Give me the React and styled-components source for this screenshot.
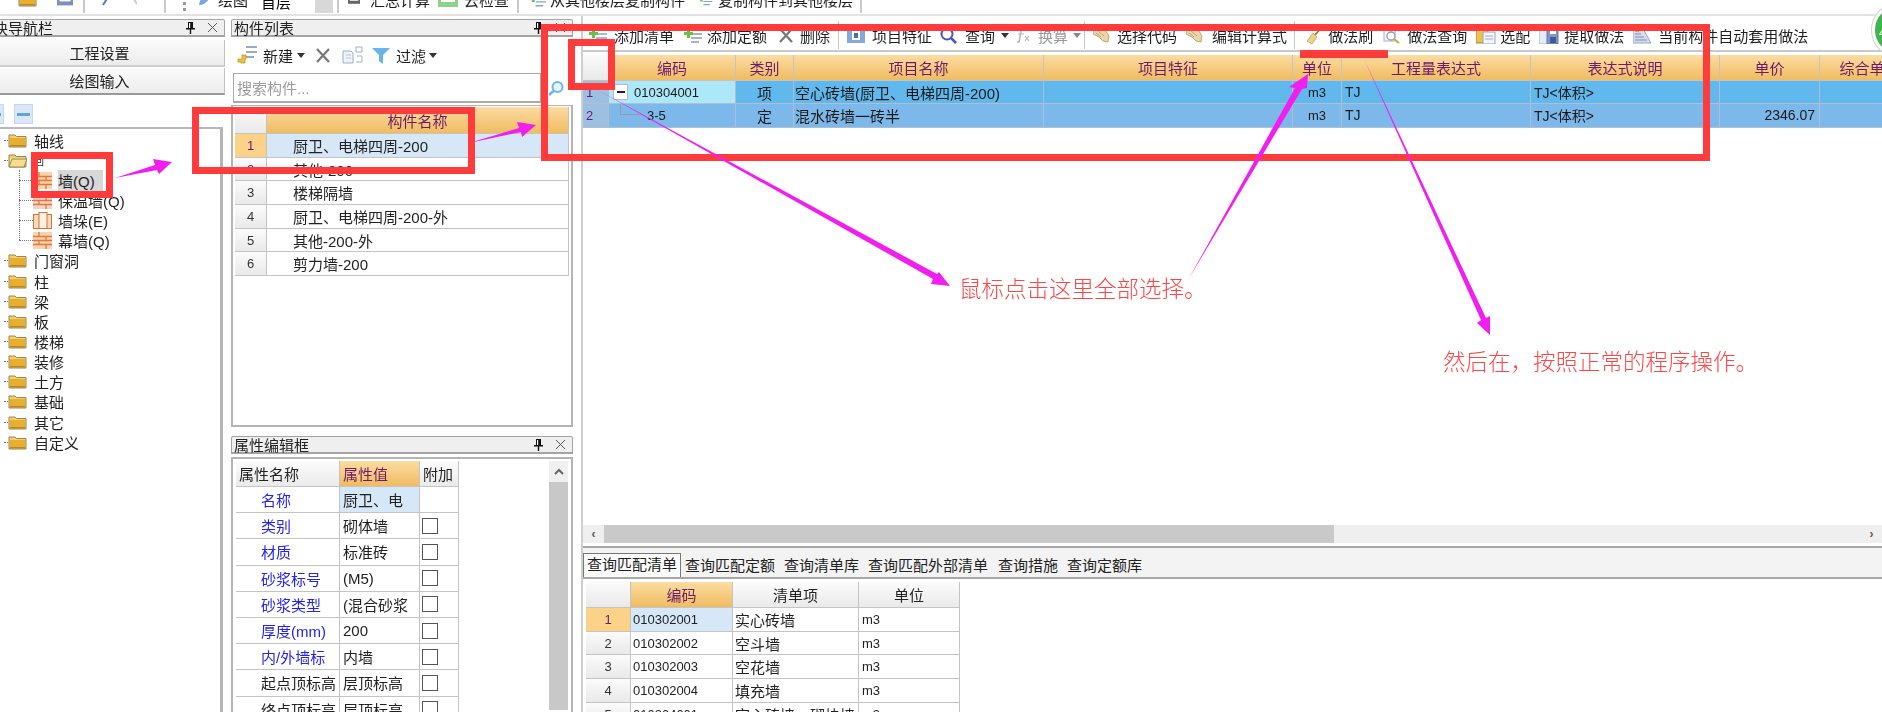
import styled, { createGlobalStyle, css } from 'styled-components';

const SANS = `"Liberation Sans", "Noto Sans CJK SC", sans-serif`;

const GlobalStyle = createGlobalStyle`
  html, body {
    margin: 0;
    padding: 0;
    background: #fff;
    overflow: hidden;
  }
  * {
    box-sizing: border-box;
  }
`;

/* ---------- icons ---------- */

const FolderIcon = ({ open }) => (
  <svg width='19' height='15' viewBox='0 0 19 15'>
    <path d='M1 3V2h6l1.500 1.500H18V14H1z' fill='#f4cf6e' stroke='#9a8650' strokeWidth='1' />
    <rect x='2' y='5' width='15' height='8' fill={open ? '#fbe6a6' : '#e8ae2e'} />
    <rect x='2' y='12' width='15' height='1.500' fill='#b9862a' />
    {open && <path d='M1 14l3-8h15l-3 8z' fill='#f8dd93' stroke='#9a8650' strokeWidth='1' />}
  </svg>
);

const BrickIcon = ({ faded }) => (
  <svg width='19' height='17' viewBox='0 0 19 17'>
    <rect width='19' height='17' fill={faded ? '#f2d4c6' : '#fbd3ae'} />
    <path d='M0 4.500h19M0 8.500h19M0 12.500h19M6 0v4.500M13 4.500v4M6 8.500v4M13 12.500V17' stroke='#e1793c' strokeWidth='1.300' />
  </svg>
);

const PillarIcon = () => (
  <svg width='19' height='17' viewBox='0 0 19 17'>
    <rect x='.5' y='2.500' width='18' height='14' fill='#fcd9ba' stroke='#d8703a' />
    <rect x='6' y='.5' width='8' height='16' fill='#fff1e2' stroke='#d8703a' />
  </svg>
);

const Pin = () => (
  <svg width='9' height='12' viewBox='0 0 9 12'>
    <path d='M2 0h5v6h2v1.500H5.200V12H3.800V7.500H0V6h2z' fill='#111' />
    <rect x='3' y='1' width='1.200' height='5' fill='#fff' />
  </svg>
);

const CloseX = () => (
  <svg width='11' height='11' viewBox='0 0 11 11'>
    <path d='M1 1l9 9M10 1l-9 9' stroke='#555' strokeWidth='1' />
  </svg>
);

const Caret = () => (
  <svg width='8' height='5' viewBox='0 0 8 5'>
    <path d='M0 0h8L4 5z' fill='#333' />
  </svg>
);

const GreyCaret = () => (
  <svg width='8' height='5' viewBox='0 0 8 5'>
    <path d='M0 0h8L4 5z' fill='#888' />
  </svg>
);

const DeleteX = ({ w = 16 }) => (
  <svg width={w} height='15' viewBox='0 0 16 15'>
    <path d='M2 1l12 13M14 1L2 14' stroke='#777' strokeWidth='2.200' />
  </svg>
);

const AddLines = ({ tint = '#7fa6d2', w = 20 }) => (
  <svg width={w} height='15' viewBox='0 0 20 15'>
    <path d='M8 2h11M8 6h11M8 10h11M8 14h8' stroke={tint} strokeWidth='1.500' />
    <path d='M1 4h3V1h3v3h3v3H7v3H4V7H1z' fill='#6bbf4d' />
  </svg>
);

const NewIcon = () => (
  <svg width='20' height='22' viewBox='0 0 20 22'>
    <path d='M9 3h11M9 8h11M9 13h8' stroke='#7e8fa8' strokeWidth='1.400' />
    <path d='M1 15h4v-4h4v4h-1v4H4v-1H1z' fill='#f0c040' stroke='#b78c1a' strokeWidth='.7' />
  </svg>
);

const CopyIcon = () => (
  <svg width='21' height='18' viewBox='0 0 21 18'>
    <path d='M1 5h8l2 2v10H1z' fill='#eef3f9' stroke='#9fb0c4' />
    <path d='M4 9h5M4 12h5' stroke='#b8c6d6' />
    <path d='M14 1h6v5h-6z' fill='#fff' stroke='#9fb0c4' />
    <path d='M15 10h5v6h-6' fill='none' stroke='#9fb0c4' />
  </svg>
);

const FilterIcon = () => (
  <svg width='18' height='17' viewBox='0 0 18 17'>
    <path d='M0 1h18l-7 7v9l-4-3V8z' fill='#68b3ea' />
  </svg>
);

const Lens = ({ w = 19, tint = '#4a55c0' }) => (
  <svg width={w} height='17' viewBox='0 0 19 17'>
    <circle cx='8' cy='7' r='5.500' fill='#fff' stroke={tint} strokeWidth='2' />
    <path d='M12 11l5 5' stroke={tint} strokeWidth='2.500' />
  </svg>
);

const SearchLens = () => (
  <svg width='16' height='15' viewBox='0 0 16 15'>
    <circle cx='9.500' cy='6' r='5' fill='#e9f5fd' stroke='#6db6e8' strokeWidth='2' />
    <path d='M6 9.500L1 14' stroke='#6db6e8' strokeWidth='2.500' />
  </svg>
);

const FeatureIcon = () => (
  <svg width='18' height='16' viewBox='0 0 18 16'>
    <rect width='18' height='16' fill='#86a9dc' />
    <rect x='5' y='3' width='8' height='10' fill='#fff' />
    <rect x='7' y='6' width='4' height='5' fill='#4d6ea8' />
  </svg>
);

const FxIcon = () => (
  <svg width='15' height='15' viewBox='0 0 15 15'>
    <path d='M9 1C6 1 6 3 5.500 6L4 14H2' fill='none' stroke='#b5b5b5' strokeWidth='1.500' />
    <path d='M3 6h6M10 8l4 5M14 8l-4 5' stroke='#b5b5b5' strokeWidth='1.200' />
  </svg>
);

const HandIcon = ({ w = 17 }) => (
  <svg width={w} height='16' viewBox='0 0 17 16'>
    <path d='M0 3l7-2 6 3 3 5-1 6-5-1-4-4-6-3z' fill='#e7d6a8' stroke='#a9986c' strokeWidth='.8' />
    <path d='M5 4l6 5M3 6l5 4' stroke='#a9986c' strokeWidth='.7' />
  </svg>
);

const BrushIcon = () => (
  <svg width='15' height='17' viewBox='0 0 15 17'>
    <path d='M15 0L8 8' stroke='#9a7a3a' strokeWidth='1.800' />
    <path d='M6 6l4 4-5 7-5-3z' fill='#ecd28a' stroke='#b59a54' strokeWidth='.7' />
  </svg>
);

const DocLensIcon = () => (
  <svg width='18' height='17' viewBox='0 0 18 17'>
    <rect x='1' y='0' width='11' height='14' fill='#f2f4f8' stroke='#a6b3c6' />
    <circle cx='8' cy='9' r='4' fill='#fff' stroke='#8d99ac' strokeWidth='1.300' />
    <path d='M11 12l5 4' stroke='#d8a53d' strokeWidth='2.200' />
  </svg>
);

const MatchIcon = () => (
  <svg width='20' height='17' viewBox='0 0 20 17'>
    <rect x='0' y='2' width='12' height='14' fill='#efc24e' stroke='#a88628' />
    <rect x='7' y='5' width='12' height='12' fill='#f3f5f9' stroke='#98a6ba' />
    <path d='M9 9h8M9 12h8' stroke='#9db0c8' />
  </svg>
);

const DiskIcon = () => (
  <svg width='20' height='18' viewBox='0 0 20 18'>
    <rect x='0' y='4' width='10' height='14' fill='#e6ecf5' stroke='#a7b4c8' />
    <path d='M8 1h11v17H8z' fill='#7f97c8' stroke='#5d76aa' />
    <rect x='11' y='2' width='6' height='6' fill='#fff' />
    <rect x='11' y='11' width='6' height='6' fill='#3f5c98' />
  </svg>
);

const AutoIcon = () => (
  <svg width='19' height='18' viewBox='0 0 19 18'>
    <path d='M0 1h9l9 16H0z' fill='#d5dcec' stroke='#98a6c4' />
    <path d='M2 8h6M2 11h9M2 14h12' stroke='#7d8bb0' />
    <rect x='2' y='4' width='4' height='2' fill='#e0a63a' />
  </svg>
);

const MiniIcon = ({ w, tint }) => (
  <svg width={w} height='16' viewBox='0 0 20 16'>
    <rect x='0' y='0' width='20' height='16' fill={tint} />
    <rect x='3' y='3' width='14' height='8' fill='#fff' />
  </svg>
);

/* ---------- top bar ---------- */

const TopBar = styled.div`
  height: 16px;
  flex: none;
  overflow: hidden;
  border-bottom: 2px solid #e2e2e2;
  padding-left: 18px;
`;

const TopRow = styled.div`
  height: 28px;
  margin-top: -15px;
  display: flex;
  align-items: center;
`;

const Slot = styled.span`
  flex: none;
  display: flex;
  align-items: center;
  margin-left: ${(p) => p.$ml || 0}px;
  font-size: 15px;
  white-space: nowrap;
  color: ${(p) => (p.$muted ? '#9a9a9a' : '#1f1f1f')};
`;

const Separator = styled.i`
  display: block;
  flex: none;
  width: ${(p) => p.$w || 2}px;
  height: ${(p) => p.$h || 28}px;
  margin-left: ${(p) => p.$ml || 0}px;
  background: #c9c9c9;
`;

const LevelBox = styled.span`
  display: block;
  flex: none;
  width: 58px;
  height: 28px;
  margin-left: 9px;
  padding: 6px 0 0 4px;
  background: #fff;
  font-size: 15px;
`;

const LevelButton = styled.span`
  display: block;
  flex: none;
  width: 18px;
  height: 28px;
  background: #d8d8d8;
`;

const Dots = styled.i`
  display: block;
  flex: none;
  width: 3px;
  height: 14px;
  margin: 10px 0 0 17px;
  border-left: 3px dotted #999;
`;

/* ---------- panels ---------- */

const Workspace = styled.div`
  flex: 1;
  min-height: 0;
  display: flex;
`;

const NavColumn = styled.div`
  flex: none;
  width: 250px;
  margin-left: -25px;
  padding-top: 3px;
  display: flex;
  flex-direction: column;
`;

const MiddleColumn = styled.div`
  flex: none;
  width: 342px;
  margin-left: 6px;
  padding-top: 3px;
  display: flex;
  flex-direction: column;
`;

const PanelHeader = styled.div`
  height: 18px;
  flex: none;
  display: flex;
  align-items: center;
  gap: 12px;
  padding: 0 6px 0 2px;
  background: #efefef;
  border: 1px solid #a4a4a4;
  border-bottom-width: 2px;
  border-radius: 2px 2px 0 0;
  font-size: 15px;
  color: #222;
  margin-top: ${(p) => p.$mt || 0}px;

  span:first-child {
    flex: 1;
  }
`;

const NavButton = styled.div`
  height: ${(p) => p.$h}px;
  flex: none;
  margin-top: ${(p) => p.$mt}px;
  display: flex;
  align-items: center;
  justify-content: center;
  background: linear-gradient(#fbfbfb, #ececec);
  border-bottom: 2px solid ${(p) => (p.$last ? '#999' : '#d0d0d0')};
  border-right: 1px solid #c2c2c2;
  font-size: 15px;
  color: #222;
`;

const IconRow = styled.div`
  height: 34px;
  flex: none;
  padding: 9px 0 0 25px;
  display: flex;
  gap: 10px;
  border-bottom: 2px solid #b9b9b9;
  width: 248px;
`;

const TreeSquare = styled.span`
  display: flex;
  align-items: center;
  justify-content: center;
  flex: none;
  width: 19px;
  height: 20px;
  margin-left: ${(p) => p.$ml || 0}px;
  background: #dbe7f9;
  border: 1px solid #c6d7f0;

  &::after {
    content: '';
    width: 13px;
    height: 3px;
    background: #5fa4d8;
  }
`;

const Tree = styled.div`
  flex: 1;
  width: 248px;
  padding: 1px 0 0 26px;
  border-right: 3px solid #b4b4b4;
  position: relative;
`;

const TreeRow = styled.div`
  height: 20.150px;
  display: flex;
  align-items: center;
  padding-left: ${(p) => (p.$child ? 32 : 7)}px;
  font-size: 15px;
  color: #222;
  white-space: nowrap;

  &::before {
    content: '';
    width: ${(p) => (p.$child ? 14 : 4)}px;
    margin-left: ${(p) => (p.$child ? -14 : -4)}px;
    border-top: 1px dotted #777;
  }
`;

const TreeLabel = styled.span`
  margin-left: 6px;
  padding-right: 8px;
  ${(p) => p.$selected && 'background: #d8d8d8;'}
`;

const FolderLabel = styled.span`
  margin-left: 7px;
  font-size: ${(p) => (p.$tiny ? 10 : 15)}px;
`;

const TreeLine = styled.i`
  position: absolute;
  left: 44px;
  top: 41px;
  height: 70px;
  border-left: 1px dotted #777;
`;

const SmallToolbar = styled.div`
  height: 36px;
  flex: none;
  display: flex;
  align-items: center;
  padding-left: 6px;
`;

const SearchRow = styled.div`
  flex: none;
  height: 30px;
  display: flex;
  align-items: center;
`;

const SearchField = styled.div`
  width: 308px;
  margin-left: 2px;
  height: 30px;
  padding: 3px 0 0 3px;
  border: 1px solid #aaa;
  border-bottom-width: 2px;
  font-size: 15px;
  color: #9c9c9c;
`;

const ListBox = styled.div`
  height: 322px;
  flex: none;
  margin-top: 2px;
  padding: 1px 2px;
  border: 2px solid #b4b4b4;
  border-top-width: 1px;
  background: #fff;
  overflow: hidden;
`;

const PropBox = styled.div`
  flex: 1;
  margin-top: 3px;
  padding: 2px 3px;
  border: 2px solid #b4b4b4;
  border-bottom: 0;
  display: flex;
  justify-content: space-between;
  overflow: hidden;
`;

const ScrollColumn = styled.div`
  flex: none;
  width: 19px;
  background: #c8c8c8;
`;

const ScrollUp = styled.div`
  height: 21px;
  display: flex;
  align-items: center;
  justify-content: center;
  background: #f0f0f0;
  color: #555;
`;

const Checkbox = styled.i`
  display: block;
  width: 16px;
  height: 16px;
  margin: 0 0 0 2px;
  background: #fff;
  border: 1px solid #555;
`;

/* ---------- grid tables ---------- */

const Row = styled.div`
  display: grid;
  grid-template-columns: ${(p) => p.$cols};
  height: ${(p) => p.$h}px;
`;

const tones = {
  plain: css`
    background: #fff;
    color: #222;
  `,
  head: css`
    background: linear-gradient(#fcfcfc, #eaeaea);
    color: #222;
  `,
  active: css`
    background: linear-gradient(#fcdca2, #f0bc60);
    color: #6b1a6e;
  `,
  index: css`
    background: linear-gradient(#fbfbfb, #e9e9e9);
    color: #333;
  `,
  indexActive: css`
    background: #fbd288;
    color: #6b1a6e;
  `,
  selected: css`
    background: #d6e8f8;
    color: #222;
  `,
  sky: css`
    background: #60b8ec;
    color: #1a1a1a;
  `,
  skyIndex: css`
    background: #9cbfe2;
    color: #6b1a6e;
  `,
  skyCode: css`
    background: #ade8f8;
    color: #1a1a1a;
  `,
  soft: css`
    background: #7cb8ea;
    color: #1a1a1a;
  `,
  link: css`
    background: #fff;
    color: #2424ee;
  `,
};

const Cell = styled.div`
  display: flex;
  align-items: center;
  overflow: hidden;
  white-space: nowrap;
  justify-content: ${(p) => p.$align || 'flex-start'};
  padding: 0 ${(p) => p.$pr || 0}px 0 ${(p) => p.$pl || 0}px;
  font-size: ${(p) => p.$size || 15}px;
  border-right: 1.500px solid ${(p) => p.$line || '#c4c4c4'};
  border-bottom: 1.500px solid ${(p) => p.$line || '#c4c4c4'};
  ${(p) => tones[p.$tone || 'plain']}
`;

const MinusBox = styled.span`
  display: flex;
  align-items: center;
  justify-content: center;
  flex: none;
  width: 15px;
  height: 16px;
  margin: 0 6px 0 4px;
  background: #fff;
  border: 1px solid #bbb;

  &::after {
    content: '';
    width: 8px;
    height: 2px;
    background: #222;
  }
`;

const Elbow = styled.i`
  display: block;
  flex: none;
  width: 22px;
  height: 12px;
  margin: -12px 5px 0 11px;
  border-left: 1px solid #9a9a9a;
  border-bottom: 1px solid #9a9a9a;
`;

/* ---------- right side ---------- */

const RightColumn = styled.div`
  flex: 1;
  min-width: 0;
  margin-left: 8px;
  display: flex;
  flex-direction: column;
  border-left: 2px solid #cfcfcf;
`;

const MainToolbar = styled.div`
  height: 36px;
  flex: none;
  display: flex;
  align-items: center;
  padding-top: 4px;
  border-bottom: 2px solid #c9c9c9;
  overflow: hidden;
  white-space: nowrap;
`;

const TableArea = styled.div`
  height: 473px;
  flex: none;
  padding-top: 3px;
  overflow: hidden;
`;

const HScroll = styled.div`
  height: 18px;
  flex: none;
  display: flex;
  background: #efefef;
`;

const HScrollArrow = styled.div`
  width: 21px;
  display: flex;
  align-items: center;
  justify-content: center;
  color: #555;
  font-size: 12px;
  font-weight: 700;
`;

const HScrollThumb = styled.div`
  width: 730px;
  background: #c9c9c9;
`;

const HScrollEnd = styled(HScrollArrow)`
  margin-left: auto;
`;

const TabBar = styled.div`
  flex: none;
  height: 33px;
  margin-top: 3px;
  border-top: 2px solid #a8a8a8;
  border-bottom: 2px solid #a8a8a8;
  padding: 7px 0 0 0;
  background: #f3f3f3;
  display: flex;
  align-items: flex-end;
  position: relative;
`;

const Tab = styled.div`
  flex: none;
  height: ${(p) => (p.$active ? 24 : 22)}px;
  margin-left: ${(p) => p.$ml || 0}px;
  padding: 0 ${(p) => (p.$active ? 3 : 0)}px;
  font-size: 15px;
  line-height: 22px;
  color: #222;
  white-space: nowrap;
  ${(p) => p.$active && 'border: 1px solid #777; border-bottom: 0; background: #fbfbfb;'}
`;

const LowerTable = styled.div`
  flex: 1;
  padding: 3px 0 0 3px;
  overflow: hidden;
  width: 380px;
`;

/* ---------- annotations, they lie over the screenshot ---------- */

const Screen = styled.div`
  position: relative;
  width: 1882px;
  height: 712px;
  overflow: hidden;
  background: #fff;
  font-family: ${SANS};
`;

const Frame = styled.div`
  height: 100%;
  display: flex;
  flex-direction: column;
  filter: blur(0.45px);
`;

const RedBox = styled.div`
  position: absolute;
  left: ${(p) => p.$x}px;
  top: ${(p) => p.$y}px;
  width: ${(p) => p.$w}px;
  height: ${(p) => p.$h}px;
  border: 7px solid #ff3b3b;
`;

const RedBar = styled.div`
  position: absolute;
  left: 1300px;
  top: 50px;
  width: 88px;
  height: 8px;
  background: #ff3b3b;
`;

const Callout = styled.div`
  position: absolute;
  left: ${(p) => p.$x}px;
  top: ${(p) => p.$y}px;
  font-size: 22.500px;
  line-height: 24px;
  font-weight: 300;
  color: #ff4646;
  white-space: nowrap;
`;

const ArrowLayer = styled.svg`
  position: absolute;
  inset: 0;
`;

const Badge = styled.div`
  position: absolute;
  left: 1872px;
  top: 3px;
  width: 54px;
  height: 54px;
  border-radius: 50%;
  padding: 19px 0 0 4px;
  background: #3fb54c;
  border: 3px solid #fff;
  box-shadow: 0 0 0 1px #cfcfcf;
  font-size: 13px;
  color: #fff;
`;

/* ---------- data ---------- */

const NAV_TOP = ['轴线'];
const NAV_WALLS = [
  { label: '墙(Q)', icon: <BrickIcon />, selected: true },
  { label: '保温墙(Q)', icon: <BrickIcon faded /> },
  { label: '墙垛(E)', icon: <PillarIcon /> },
  { label: '幕墙(Q)', icon: <BrickIcon /> },
];
const NAV_REST = ['门窗洞', '柱', '梁', '板', '楼梯', '装修', '土方', '基础', '其它', '自定义'];

const LIST_COLS = '32px 1fr';
const COMPONENTS = ['厨卫、电梯四周-200', '其他-200', '楼梯隔墙', '厨卫、电梯四周-200-外', '其他-200-外', '剪力墙-200'];

const PROP_COLS = '104px 80px 39px';
const PROPS = [
  { name: '名称', value: '厨卫、电', blue: true, selected: true },
  { name: '类别', value: '砌体墙', blue: true },
  { name: '材质', value: '标准砖', blue: true },
  { name: '砂浆标号', value: '(M5)', blue: true },
  { name: '砂浆类型', value: '(混合砂浆', blue: true },
  { name: '厚度(mm)', value: '200', blue: true },
  { name: '内/外墙标', value: '内墙', blue: true },
  { name: '起点顶标高', value: '层顶标高' },
  { name: '终点顶标高', value: '层顶标高' },
];

const MAIN_COLS = '26px 127px 58px 250px 249px 49px 189px 189px 100px 100px';
const MAIN_HEAD = ['编码', '类别', '项目名称', '项目特征', '单位', '工程量表达式', '表达式说明', '单价', '综合单价'];

const MAIN_TOOLS = [
  { ml: 5, icon: <AddLines /> },
  { ml: 6, text: '添加清单' },
  { ml: 9, icon: <AddLines tint='#8c9aaa' /> },
  { ml: 4, text: '添加定额' },
  { ml: 11, icon: <DeleteX /> },
  { ml: 6, text: '删除' },
  { ml: 8, sep: true },
  { ml: 8, icon: <FeatureIcon /> },
  { ml: 7, text: '项目特征' },
  { ml: 7, icon: <Lens /> },
  { ml: 7, text: '查询' },
  { ml: 6, icon: <Caret /> },
  { ml: 6, icon: <FxIcon /> },
  { ml: 8, text: '换算', muted: true },
  { ml: 5, icon: <GreyCaret /> },
  { ml: 3, sep: true },
  { ml: 8, icon: <HandIcon /> },
  { ml: 7, text: '选择代码' },
  { ml: 9, icon: <HandIcon /> },
  { ml: 9, text: '编辑计算式' },
  { ml: 7, sep: true },
  { ml: 12, icon: <BrushIcon /> },
  { ml: 6, text: '做法刷' },
  { ml: 10, icon: <DocLensIcon /> },
  { ml: 6, text: '做法查询' },
  { ml: 9, icon: <MatchIcon /> },
  { ml: 4, text: '选配' },
  { ml: 9, icon: <DiskIcon /> },
  { ml: 5, text: '提取做法' },
  { ml: 9, icon: <AutoIcon /> },
  { ml: 6, text: '当前构件自动套用做法' },
];

const TABS = [
  { label: '查询匹配定额', ml: 4 },
  { label: '查询清单库', ml: 9 },
  { label: '查询匹配外部清单', ml: 9 },
  { label: '查询措施', ml: 10 },
  { label: '查询定额库', ml: 9 },
];

const LOWER_COLS = '45px 102px 126px 101px';
const LOWER_ROWS = [
  ['010302001', '实心砖墙'],
  ['010302002', '空斗墙'],
  ['010302003', '空花墙'],
  ['010302004', '填充墙'],
  ['010304001', '空心砖墙、砌块墙'],
];

const App = () => {
  return (
    <Screen>
      <GlobalStyle />
      <Frame>
        <TopBar>
          <TopRow>
            <Slot><FolderIcon /></Slot>
            <Slot $ml={20}><MiniIcon w={16} tint='#7c8fbe' /></Slot>
            <Separator $ml={10} />
            <Slot $ml={17}><svg width='8' height='14'><path d='M8 2L1 13' stroke='#4a7fd0' strokeWidth='2' /></svg></Slot>
            <Slot $ml={22}><svg width='5' height='14'><path d='M0 4l5 8' stroke='#ccc' strokeWidth='2' /></svg></Slot>
            <Separator $ml={27} />
            <Dots />
            <Slot $ml={11}><svg width='16' height='16'><path d='M2 14C8 14 14 8 15 1 9 2 3 6 2 14z' fill='#7aa5dc' /></svg></Slot>
            <Slot $ml={5}>绘图</Slot>
            <LevelBox>首层</LevelBox>
            <LevelButton />
            <Separator $ml={4} />
            <Slot $ml={9}><MiniIcon w={12} tint='#666' /></Slot>
            <Slot $ml={10}>汇总计算</Slot>
            <Slot $ml={8}><MiniIcon w={20} tint='#8fd08f' /></Slot>
            <Slot $ml={6}>云检查</Slot>
            <Separator $ml={8} />
            <Slot $ml={9}><AddLines w={19} /></Slot>
            <Slot $ml={3}>从其他楼层复制构件</Slot>
            <Slot $ml={12}><AddLines w={16} /></Slot>
            <Slot $ml={5}>复制构件到其他楼层</Slot>
            <Separator $ml={7} />
          </TopRow>
        </TopBar>

        <Workspace>
          <NavColumn>
            <PanelHeader>
              <span>模块导航栏</span>
              <Pin />
              <CloseX />
            </PanelHeader>
            <NavButton $h={27} $mt={3}>工程设置</NavButton>
            <NavButton $h={27} $mt={1} $last>绘图输入</NavButton>
            <IconRow>
              <TreeSquare $ml={-15} />
              <TreeSquare />
            </IconRow>
            <Tree>
              <TreeLine />
              {NAV_TOP.map((name) => (
                <TreeRow key={name}>
                  <FolderIcon />
                  <FolderLabel>{name}</FolderLabel>
                </TreeRow>
              ))}
              <TreeRow>
                <FolderIcon open />
                <FolderLabel $tiny>回</FolderLabel>
              </TreeRow>
              {NAV_WALLS.map((wall) => (
                <TreeRow key={wall.label} $child>
                  {wall.icon}
                  <TreeLabel $selected={wall.selected}>{wall.label}</TreeLabel>
                </TreeRow>
              ))}
              {NAV_REST.map((name) => (
                <TreeRow key={name}>
                  <FolderIcon />
                  <FolderLabel>{name}</FolderLabel>
                </TreeRow>
              ))}
            </Tree>
          </NavColumn>

          <MiddleColumn>
            <PanelHeader>
              <span>构件列表</span>
              <Pin />
              <CloseX />
            </PanelHeader>
            <SmallToolbar>
              <NewIcon />
              <Slot $ml={6}>新建</Slot>
              <Slot $ml={4}><Caret /></Slot>
              <Slot $ml={10}><DeleteX /></Slot>
              <Slot $ml={11}><CopyIcon /></Slot>
              <Slot $ml={9}><FilterIcon /></Slot>
              <Slot $ml={6}>过滤</Slot>
              <Slot $ml={3}><Caret /></Slot>
            </SmallToolbar>
            <SearchRow>
              <SearchField>搜索构件...</SearchField>
              <Slot $ml={7}><SearchLens /></Slot>
            </SearchRow>
            <ListBox>
              <Row $cols={LIST_COLS} $h={27}>
                <Cell $tone='index' />
                <Cell $tone='active' $align='center'>构件名称</Cell>
              </Row>
              {COMPONENTS.map((name, i) => (
                <Row key={name} $cols={LIST_COLS} $h={23.700}>
                  <Cell $tone={i === 0 ? 'indexActive' : 'index'} $align='center' $size={13}>{i + 1}</Cell>
                  <Cell $tone={i === 0 ? 'selected' : 'plain'} $pl={26}>{name}</Cell>
                </Row>
              ))}
            </ListBox>
            <PanelHeader $mt={9}>
              <span>属性编辑框</span>
              <Pin />
              <CloseX />
            </PanelHeader>
            <PropBox>
              <div>
                <Row $cols={PROP_COLS} $h={26}>
                  <Cell $tone='head' $pl={3}>属性名称</Cell>
                  <Cell $tone='active' $pl={3}>属性值</Cell>
                  <Cell $tone='head' $pl={3}>附加</Cell>
                </Row>
                {PROPS.map((prop) => (
                  <Row key={prop.name} $cols={PROP_COLS} $h={26.200}>
                    <Cell $tone={prop.blue ? 'link' : 'plain'} $pl={25}>{prop.name}</Cell>
                    <Cell $tone={prop.selected ? 'selected' : 'plain'} $pl={3}>{prop.value}</Cell>
                    <Cell>{!prop.selected && <Checkbox />}</Cell>
                  </Row>
                ))}
              </div>
              <ScrollColumn>
                <ScrollUp>
                  <svg width='10' height='7'><path d='M1 6l4-4 4 4' fill='none' stroke='#666' strokeWidth='2' /></svg>
                </ScrollUp>
              </ScrollColumn>
            </PropBox>
          </MiddleColumn>

          <RightColumn>
            <MainToolbar>
              {MAIN_TOOLS.map((tool, i) =>
                tool.sep ? (
                  <Separator key={i} $ml={tool.ml} $w={1} $h={28} />
                ) : (
                  <Slot key={i} $ml={tool.ml} $muted={tool.muted}>{tool.icon || tool.text}</Slot>
                )
              )}
            </MainToolbar>
            <TableArea>
              <Row $cols={MAIN_COLS} $h={26}>
                <Cell $tone='index' />
                {MAIN_HEAD.map((title) => (
                  <Cell key={title} $tone='active' $align='center'>{title}</Cell>
                ))}
              </Row>
              <Row $cols={MAIN_COLS} $h={23}>
                <Cell $tone='skyIndex' $line='#aebfd2' $pl={3} $size={13}>1</Cell>
                <Cell $tone='skyCode' $line='#aebfd2' $size={13}>
                  <MinusBox />010304001
                </Cell>
                <Cell $tone='sky' $line='#aebfd2' $align='center'>项</Cell>
                <Cell $tone='sky' $line='#aebfd2' $pl={1}>空心砖墙(厨卫、电梯四周-200)</Cell>
                <Cell $tone='sky' $line='#aebfd2' />
                <Cell $tone='sky' $line='#aebfd2' $align='center' $size={13}>m3</Cell>
                <Cell $tone='sky' $line='#aebfd2' $pl={3} $size={14}>TJ</Cell>
                <Cell $tone='sky' $line='#aebfd2' $pl={3} $size={14}>TJ&lt;体积&gt;</Cell>
                <Cell $tone='sky' $line='#aebfd2' />
                <Cell $tone='sky' $line='#aebfd2' />
              </Row>
              <Row $cols={MAIN_COLS} $h={23.500}>
                <Cell $tone='skyIndex' $line='#aebfd2' $pl={3} $size={13}>2</Cell>
                <Cell $tone='soft' $line='#aebfd2' $size={13}>
                  <Elbow />3-5
                </Cell>
                <Cell $tone='soft' $line='#aebfd2' $align='center'>定</Cell>
                <Cell $tone='soft' $line='#aebfd2' $pl={1}>混水砖墙一砖半</Cell>
                <Cell $tone='soft' $line='#aebfd2' />
                <Cell $tone='soft' $line='#aebfd2' $align='center' $size={13}>m3</Cell>
                <Cell $tone='soft' $line='#aebfd2' $pl={3} $size={14}>TJ</Cell>
                <Cell $tone='soft' $line='#aebfd2' $pl={3} $size={14}>TJ&lt;体积&gt;</Cell>
                <Cell $tone='soft' $line='#aebfd2' $align='flex-end' $pr={4} $size={14}>2346.07</Cell>
                <Cell $tone='soft' $line='#aebfd2' />
              </Row>
            </TableArea>
            <HScroll>
              <HScrollArrow>‹</HScrollArrow>
              <HScrollThumb />
              <HScrollEnd>›</HScrollEnd>
            </HScroll>
            <TabBar>
              <Tab $active>查询匹配清单</Tab>
              {TABS.map((tab) => (
                <Tab key={tab.label} $ml={tab.ml}>{tab.label}</Tab>
              ))}
            </TabBar>
            <LowerTable>
              <Row $cols={LOWER_COLS} $h={26}>
                <Cell $tone='index' />
                <Cell $tone='active' $align='center'>编码</Cell>
                <Cell $tone='head' $align='center'>清单项</Cell>
                <Cell $tone='head' $align='center'>单位</Cell>
              </Row>
              {LOWER_ROWS.map(([code, name], i) => (
                <Row key={code} $cols={LOWER_COLS} $h={23.700}>
                  <Cell $tone={i === 0 ? 'indexActive' : 'index'} $align='center' $size={13}>{i + 1}</Cell>
                  <Cell $tone={i === 0 ? 'selected' : 'plain'} $pl={2} $size={13}>{code}</Cell>
                  <Cell $pl={2}>{name}</Cell>
                  <Cell $pl={3} $size={13}>m3</Cell>
                </Row>
              ))}
            </LowerTable>
          </RightColumn>
        </Workspace>
      </Frame>

      <Badge>4</Badge>
      <RedBox $x={31} $y={152} $w={82} $h={46} />
      <RedBox $x={192} $y={107} $w={283} $h={67} />
      <RedBox $x={541} $y={24} $w={1169} $h={137} />
      <RedBox $x={568} $y={39} $w={47} $h={51} />
      <RedBar />
      <ArrowLayer width='1882' height='712' viewBox='0 0 1882 712'>
        <g fill='#f01ff0'>
          <polygon points='115,178 155,165 153,159 172,162 159,174 157,170' />
          <polygon points='469,143 519,128 517,122 536,125 522,137 521,132' />
          <polygon points='596,89 937,274 939,272 950,286 931,284 933,279' />
          <polygon points='1188,280 1295,88 1289,87 1308,74 1307,88 1302,89' />
          <polygon points='1364,59 1486,318 1490,316 1490,335 1477,323 1481,320' />
        </g>
      </ArrowLayer>
      <Callout $x={959} $y={278}>鼠标点击这里全部选择。</Callout>
      <Callout $x={1443} $y={351}>然后在，按照正常的程序操作。</Callout>
    </Screen>
  );
};

export default App;
